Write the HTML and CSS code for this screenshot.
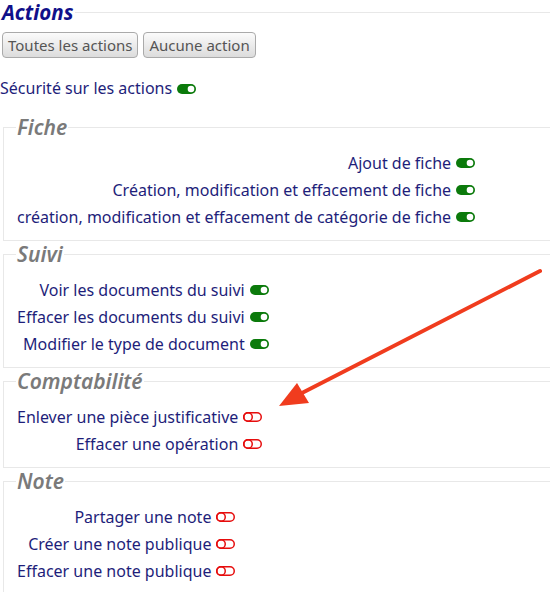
FILE: index.html
```html
<!DOCTYPE html>
<html lang="fr">
  <head>
    <meta charset="UTF-8" />
    <title>Actions</title>
    <link rel="stylesheet" href="styles.css">
  </head>
  <body>
    <fieldset class="actions">
      <legend>Actions</legend>
      <div class="toolbar">
        <button type="button">Toutes les actions</button>
        <button type="button">Aucune action</button>
      </div>
      <div class="security">Sécurité sur les actions <svg class="toggle" width="19" height="10" viewBox="0 0 19 10"><rect width="19" height="10" rx="5" fill="#0b7a0b"/><circle cx="14" cy="5" r="3.3" fill="#fff"/></svg></div>

      <fieldset class="group">
        <legend>Fiche</legend>
        <table>
          <tr><td>Ajout de fiche</td><td><svg class="toggle" width="19" height="10" viewBox="0 0 19 10"><rect width="19" height="10" rx="5" fill="#0b7a0b"/><circle cx="14" cy="5" r="3.3" fill="#fff"/></svg></td></tr>
          <tr><td>Création, modification et effacement de fiche</td><td><svg class="toggle" width="19" height="10" viewBox="0 0 19 10"><rect width="19" height="10" rx="5" fill="#0b7a0b"/><circle cx="14" cy="5" r="3.3" fill="#fff"/></svg></td></tr>
          <tr><td>création, modification et effacement de catégorie de fiche</td><td><svg class="toggle" width="19" height="10" viewBox="0 0 19 10"><rect width="19" height="10" rx="5" fill="#0b7a0b"/><circle cx="14" cy="5" r="3.3" fill="#fff"/></svg></td></tr>
        </table>
      </fieldset>

      <fieldset class="group">
        <legend>Suivi</legend>
        <table>
          <tr><td>Voir les documents du suivi</td><td><svg class="toggle" width="19" height="10" viewBox="0 0 19 10"><rect width="19" height="10" rx="5" fill="#0b7a0b"/><circle cx="14" cy="5" r="3.3" fill="#fff"/></svg></td></tr>
          <tr><td>Effacer les documents du suivi</td><td><svg class="toggle" width="19" height="10" viewBox="0 0 19 10"><rect width="19" height="10" rx="5" fill="#0b7a0b"/><circle cx="14" cy="5" r="3.3" fill="#fff"/></svg></td></tr>
          <tr><td>Modifier le type de document</td><td><svg class="toggle" width="19" height="10" viewBox="0 0 19 10"><rect width="19" height="10" rx="5" fill="#0b7a0b"/><circle cx="14" cy="5" r="3.3" fill="#fff"/></svg></td></tr>
        </table>
      </fieldset>

      <fieldset class="group">
        <legend>Comptabilité</legend>
        <table>
          <tr><td>Enlever une pièce justificative</td><td><svg class="toggle" width="19" height="10" viewBox="0 0 19 10"><rect x="0.75" y="0.75" width="17.5" height="8.5" rx="4.25" fill="none" stroke="#e60d0d" stroke-width="1.5"/><circle cx="5" cy="5" r="4.25" fill="none" stroke="#e60d0d" stroke-width="1.5"/></svg></td></tr>
          <tr><td>Effacer une opération</td><td><svg class="toggle" width="19" height="10" viewBox="0 0 19 10"><rect x="0.75" y="0.75" width="17.5" height="8.5" rx="4.25" fill="none" stroke="#e60d0d" stroke-width="1.5"/><circle cx="5" cy="5" r="4.25" fill="none" stroke="#e60d0d" stroke-width="1.5"/></svg></td></tr>
        </table>
      </fieldset>

      <fieldset class="group">
        <legend>Note</legend>
        <table>
          <tr><td>Partager une note</td><td><svg class="toggle" width="19" height="10" viewBox="0 0 19 10"><rect x="0.75" y="0.75" width="17.5" height="8.5" rx="4.25" fill="none" stroke="#e60d0d" stroke-width="1.5"/><circle cx="5" cy="5" r="4.25" fill="none" stroke="#e60d0d" stroke-width="1.5"/></svg></td></tr>
          <tr><td>Créer une note publique</td><td><svg class="toggle" width="19" height="10" viewBox="0 0 19 10"><rect x="0.75" y="0.75" width="17.5" height="8.5" rx="4.25" fill="none" stroke="#e60d0d" stroke-width="1.5"/><circle cx="5" cy="5" r="4.25" fill="none" stroke="#e60d0d" stroke-width="1.5"/></svg></td></tr>
          <tr><td>Effacer une note publique</td><td><svg class="toggle" width="19" height="10" viewBox="0 0 19 10"><rect x="0.75" y="0.75" width="17.5" height="8.5" rx="4.25" fill="none" stroke="#e60d0d" stroke-width="1.5"/><circle cx="5" cy="5" r="4.25" fill="none" stroke="#e60d0d" stroke-width="1.5"/></svg></td></tr>
        </table>
      </fieldset>
    </fieldset>

    <!-- annotation arrow over the page -->
    <svg class="arrow" width="550" height="592" viewBox="0 0 550 592">
      <line x1="540" y1="271" x2="300" y2="394" stroke="#f03c1e" stroke-width="4" stroke-linecap="round"/>
      <polygon points="279,406 297,383 309,403" fill="#f03c1e"/>
    </svg>
  </body>
</html>
```

FILE: styles.css
```css
html,
body {
  overflow: hidden;
}
body {
  margin: 0;
  font-family: "Noto Sans", "Open Sans", sans-serif;
  font-size: 16px;
  color: #1e1e7a;
  background: white;
}
fieldset {
  margin: 0;
  min-width: 0;
  border: 1px solid #e8e8e8;
}
.actions {
  width: 600px;
  margin: 0 0 0 -13px;
  padding: 0 0 0 12px;
}
.actions > legend {
  padding: 0 2px;
  font-size: 20.5px;
  line-height: 24px;
  font-weight: 700;
  font-style: italic;
  color: #10108a;
}
.toolbar {
  margin-top: 8px;
  padding-left: 2px;
  display: flex;
  gap: 5px;
}
.toolbar button {
  height: 26px;
  padding: 0 5px;
  border: 1px solid #aaa;
  border-radius: 4px;
  background: linear-gradient(#fbfbfb, #dcdcdc);
  color: #555;
  font-family: "Noto Sans", "Open Sans", sans-serif;
  font-size: 15px;
  cursor: pointer;
}
.security {
  margin-top: 17px;
  height: 27px;
  line-height: 27px;
  display: flex;
  align-items: center;
  gap: 5px;
}
.toggle {
  display: block;
}
.group {
  margin: 1px 0 0 3px;
  padding: 10px 12px 10px 13px;
}
.actions > .group:first-of-type {
  margin-top: 13px;
}
.group legend {
  margin-left: -1px;
  padding: 0 1px;
  font-size: 21px;
  line-height: 24px;
  font-weight: 600;
  font-style: italic;
  color: #7a7a7a;
}
.group table {
  border-collapse: collapse;
}
.group td {
  height: 27px;
  padding: 0;
  vertical-align: middle;
}
.group td:first-child {
  text-align: right;
  padding-right: 5px;
}
.arrow {
  position: absolute;
  top: 0;
  left: 0;
  pointer-events: none;
}
```
